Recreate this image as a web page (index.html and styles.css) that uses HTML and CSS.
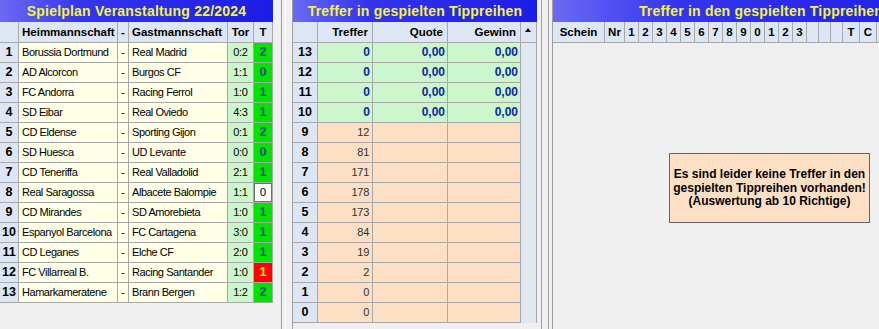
FILE: index.html
```html
<!DOCTYPE html>
<html lang="de">
<head>
<meta charset="utf-8">
<title>Spielplan</title>
<link rel="stylesheet" href="styles.css">
</head>
<body>
<div class="app">
  <section class="panel p1">
    <div class="title">Spielplan Veranstaltung 22/2024</div>
    <div class="grid g1">
      <div class="hd"></div><div class="hd left">Heimmannschaft</div><div class="hd">-</div><div class="hd left">Gastmannschaft</div><div class="hd">Tor</div><div class="hd">T</div>

      <div class="rn">1</div><div class="nm">Borussia Dortmund</div><div class="ds">-</div><div class="nm">Real Madrid</div><div class="tor">0:2</div><div class="tp">2</div>
      <div class="rn">2</div><div class="nm">AD Alcorcon</div><div class="ds">-</div><div class="nm">Burgos CF</div><div class="tor">1:1</div><div class="tp">0</div>
      <div class="rn">3</div><div class="nm">FC Andorra</div><div class="ds">-</div><div class="nm">Racing Ferrol</div><div class="tor">1:0</div><div class="tp">1</div>
      <div class="rn">4</div><div class="nm">SD Eibar</div><div class="ds">-</div><div class="nm">Real Oviedo</div><div class="tor">4:3</div><div class="tp">1</div>
      <div class="rn">5</div><div class="nm">CD Eldense</div><div class="ds">-</div><div class="nm">Sporting Gijon</div><div class="tor">0:1</div><div class="tp">2</div>
      <div class="rn">6</div><div class="nm">SD Huesca</div><div class="ds">-</div><div class="nm">UD Levante</div><div class="tor">0:0</div><div class="tp">0</div>
      <div class="rn">7</div><div class="nm">CD Teneriffa</div><div class="ds">-</div><div class="nm">Real Valladolid</div><div class="tor">2:1</div><div class="tp">1</div>
      <div class="rn">8</div><div class="nm">Real Saragossa</div><div class="ds">-</div><div class="nm">Albacete Balompie</div><div class="tor">1:1</div><div class="tp white">0</div>
      <div class="rn">9</div><div class="nm">CD Mirandes</div><div class="ds">-</div><div class="nm">SD Amorebieta</div><div class="tor">1:0</div><div class="tp">1</div>
      <div class="rn">10</div><div class="nm">Espanyol Barcelona</div><div class="ds">-</div><div class="nm">FC Cartagena</div><div class="tor">3:0</div><div class="tp">1</div>
      <div class="rn">11</div><div class="nm">CD Leganes</div><div class="ds">-</div><div class="nm">Elche CF</div><div class="tor">2:0</div><div class="tp">1</div>
      <div class="rn">12</div><div class="nm">FC Villarreal B.</div><div class="ds">-</div><div class="nm">Racing Santander</div><div class="tor">1:0</div><div class="tp red">1</div>
      <div class="rn">13</div><div class="nm">Hamarkameratene</div><div class="ds">-</div><div class="nm">Brann Bergen</div><div class="tor">1:2</div><div class="tp">2</div>
    </div>
  </section>

  <div class="split s1"><span class="ln dark"></span><span class="ln light"></span></div>

  <section class="panel p2">
    <div class="title">Treffer in gespielten Tippreihen</div>
    <div class="grid g2">
      <div class="hd"></div><div class="hd right">Treffer</div><div class="hd right">Quote</div><div class="hd right">Gewinn</div><div class="hd sch"><span class="arrow"></span></div>

      <div class="rn">13</div><div class="gv">0</div><div class="gv">0,00</div><div class="gv">0,00</div><div class="sc"></div>
      <div class="rn">12</div><div class="gv">0</div><div class="gv">0,00</div><div class="gv">0,00</div><div class="sc"></div>
      <div class="rn">11</div><div class="gv">0</div><div class="gv">0,00</div><div class="gv">0,00</div><div class="sc"></div>
      <div class="rn">10</div><div class="gv">0</div><div class="gv">0,00</div><div class="gv">0,00</div><div class="sc"></div>
      <div class="rn">9</div><div class="pv">12</div><div class="pv"></div><div class="pv"></div><div class="sc"></div>
      <div class="rn">8</div><div class="pv">81</div><div class="pv"></div><div class="pv"></div><div class="sc"></div>
      <div class="rn">7</div><div class="pv">171</div><div class="pv"></div><div class="pv"></div><div class="sc"></div>
      <div class="rn">6</div><div class="pv">178</div><div class="pv"></div><div class="pv"></div><div class="sc"></div>
      <div class="rn">5</div><div class="pv">173</div><div class="pv"></div><div class="pv"></div><div class="sc"></div>
      <div class="rn">4</div><div class="pv">84</div><div class="pv"></div><div class="pv"></div><div class="sc"></div>
      <div class="rn">3</div><div class="pv">19</div><div class="pv"></div><div class="pv"></div><div class="sc"></div>
      <div class="rn">2</div><div class="pv">2</div><div class="pv"></div><div class="pv"></div><div class="sc"></div>
      <div class="rn">1</div><div class="pv">0</div><div class="pv"></div><div class="pv"></div><div class="sc"></div>
      <div class="rn">0</div><div class="pv">0</div><div class="pv"></div><div class="pv"></div><div class="sc"></div>
    </div>
  </section>

  <div class="split s2"><span class="ln dark"></span><span class="ln dark"></span></div>

  <section class="panel p3">
    <div class="title">Treffer in den gespielten Tippreihen</div>
    <div class="grid g3">
      <div class="hd">Schein</div><div class="hd">Nr</div>
      <div class="hd">1</div><div class="hd">2</div><div class="hd">3</div><div class="hd">4</div><div class="hd">5</div><div class="hd">6</div><div class="hd">7</div><div class="hd">8</div><div class="hd">9</div><div class="hd">0</div><div class="hd">1</div><div class="hd">2</div><div class="hd">3</div>
      <div class="hd"></div><div class="hd"></div><div class="hd"></div><div class="hd">T</div><div class="hd">C</div><div class="hd"></div>
    </div>
    <div class="body3">
      <div class="msg">Es sind leider keine Treffer in den<br>gespielten Tippreihen vorhanden!<br>(Auswertung ab 10 Richtige)</div>
    </div>
  </section>
</div>
</body>
</html>
```

FILE: styles.css
```css
html, body {
  margin: 0;
  padding: 0;
  background: #f0f0f0;
  overflow: hidden;
}

body {
  width: 879px;
  height: 329px;
  font-family: "Liberation Sans", Arial, sans-serif;
  font-size: 11px;
  color: #000;
}

.app {
  display: flex;
  align-items: flex-start;
  height: 329px;
}

.panel {
  flex: none;
  display: flex;
  flex-direction: column;
}

.p1 { width: 273px; }
.p2 { width: 244px; }
.p3 { width: 416px; height: 329px; }

.title {
  height: 22px;
  line-height: 23px;
  text-align: center;
  white-space: nowrap;
  overflow: hidden;
  font-weight: bold;
  font-size: 14px;
  letter-spacing: 0.2px;
  color: #f4f43c;
  background: linear-gradient(to right, #6a6af4 0%, #3434f0 30%, #1c1ce8 100%);
}

.grid {
  display: grid;
  grid-auto-rows: 20px;
}

.grid > div {
  box-sizing: border-box;
  border-right: 1px solid #a8a8a8;
  border-bottom: 1px solid #a8a8a8;
  white-space: nowrap;
  overflow: hidden;
  line-height: 19px;
}

.g1 {
  grid-template-columns: 19px 99px 11px 99px 26px 19px;
  grid-template-rows: 21px;
}

.g2 {
  grid-template-columns: 25px 55px 75px 73px 16px;
  grid-template-rows: 21px;
}

.g3 {
  grid-template-columns: 52px 20px repeat(13, 14px) 12px 12px 12px 17px 17px 120px;
  grid-template-rows: 21px;
}

.grid > .hd {
  background: #dce6f4;
  font-weight: bold;
  font-size: 11.5px;
  line-height: 20px;
  text-align: center;
}

.grid > .hd.left { text-align: left; padding-left: 3px; }
.grid > .hd.right { text-align: right; padding-right: 4px; }

.grid > .rn {
  background: #dce6f4;
  font-weight: bold;
  font-size: 12.5px;
  text-align: center;
}

.nm {
  background: #ffffe8;
  padding-left: 3px;
  letter-spacing: -0.45px;
}

.ds {
  background: #ffffe8;
  text-align: center;
}

.tor {
  background: #ccf7cc;
  text-align: center;
  letter-spacing: -0.3px;
}

.tp {
  background: #00e400;
  text-align: center;
  font-weight: bold;
  font-size: 12.5px;
  color: #1a4a80;
}

.tp.white {
  background: #ffffff;
  color: #000;
  font-weight: normal;
  font-size: 11.5px;
  box-shadow: inset 0 0 0 1px #707070;
}

.tp.red {
  background: #ff0000;
  color: #ffff00;
}

.gv {
  background: #ccf7cc;
  text-align: right;
  padding-right: 2px;
  font-weight: bold;
  font-size: 12px;
  color: #0a28a8;
}

.pv {
  background: #fde0c4;
  text-align: right;
  padding-right: 3px;
  color: #303030;
  letter-spacing: -0.3px;
}

.grid > .sc {
  background: #e0e8f2;
  border-bottom: none;
}

.sch {
  position: relative;
}

.arrow {
  position: absolute;
  left: 4px;
  top: 6px;
  width: 0;
  height: 0;
  border-left: 3px solid transparent;
  border-right: 3px solid transparent;
  border-bottom: 4px solid #000;
}

.split {
  flex: none;
  height: 329px;
  display: flex;
  box-sizing: border-box;
}

.s1 {
  width: 20px;
  padding-left: 8px;
  gap: 3px;
  border-right: 1px solid #a0a0a0;
}

.s2 {
  width: 16px;
  padding-left: 4px;
  gap: 6px;
  border-right: 1px solid #a0a0a0;
}

.ln {
  width: 1px;
  height: 100%;
}

.ln.dark { background: #a0a0a0; }
.ln.light { background: #ffffff; }

.body3 {
  position: relative;
  flex: 1;
}

.msg {
  position: absolute;
  left: 116px;
  top: 110px;
  width: 201px;
  height: 70px;
  box-sizing: border-box;
  border: 1px solid #606470;
  background: #fde0c4;
  font-weight: bold;
  font-size: 12px;
  line-height: 13.5px;
  text-align: center;
  padding-top: 14px;
}
```
